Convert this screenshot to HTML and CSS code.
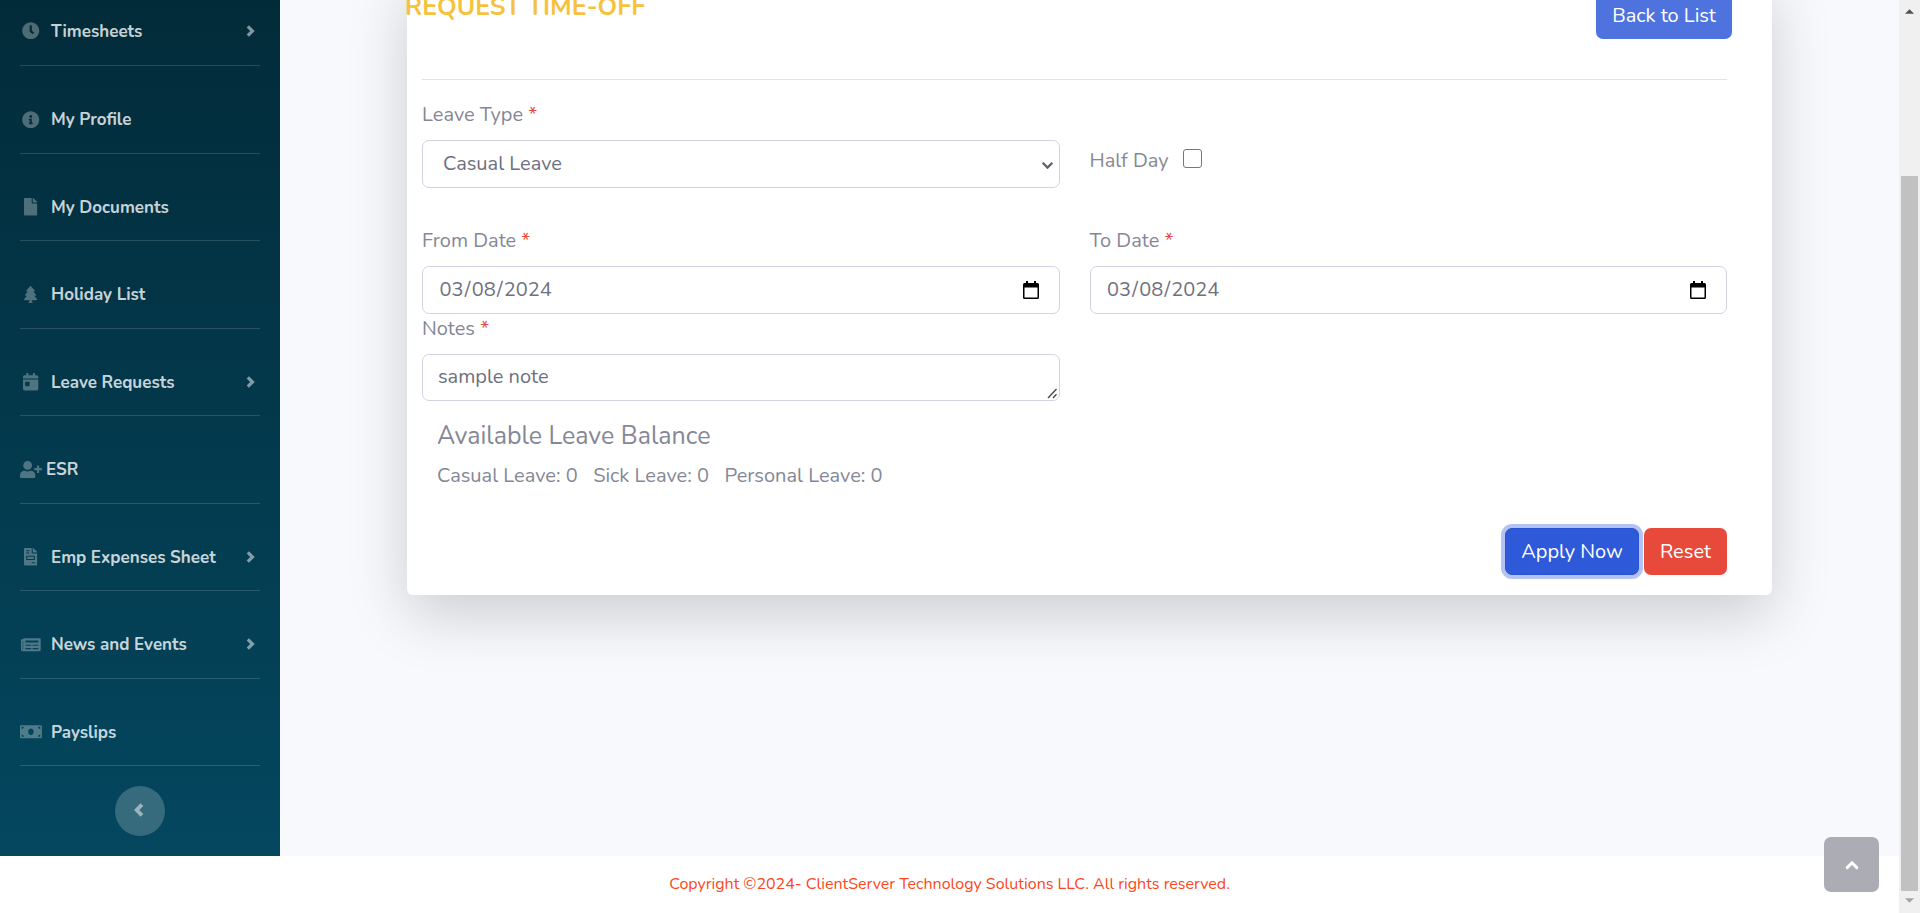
FILE: index.html
```html
<!DOCTYPE html>
<html lang="en">
<head>
<meta charset="utf-8">
<title>Request Time-Off</title>
<link rel="stylesheet" href="styles.css">
</head>
<body>
<div class="window">
  <div class="page">
    <div class="wrapper">
      <nav class="sidebar">
        <a class="item"><span class="ico"><svg viewBox="0 0 512 512"><path d="M256,8C119,8,8,119,8,256S119,504,256,504,504,393,504,256,393,8,256,8Zm92.49,313h0l-20,25a16,16,0,0,1-22.49,2.5h0l-67-49.72a40,40,0,0,1-15-31.23V112a16,16,0,0,1,16-16h32a16,16,0,0,1,16,16V256l58,42.5A16,16,0,0,1,348.49,321Z"/></svg></span><span class="name">Timesheets</span><svg class="angle" viewBox="0 0 9 12"><path d="M1.800 1.300 6.500 6 1.800 10.700"/></svg></a>
        <a class="item"><span class="ico"><svg viewBox="0 0 512 512"><path d="M256 8C119.043 8 8 119.083 8 256c0 136.997 111.043 248 248 248s248-111.003 248-248C504 119.083 392.957 8 256 8zm0 110c23.196 0 42 18.804 42 42s-18.804 42-42 42-42-18.804-42-42 18.804-42 42-42zm56 254c0 6.627-5.373 12-12 12h-88c-6.627 0-12-5.373-12-12v-24c0-6.627 5.373-12 12-12h12v-64h-12c-6.627 0-12-5.373-12-12v-24c0-6.627 5.373-12 12-12h64c6.627 0 12 5.373 12 12v100h12c6.627 0 12 5.373 12 12v24z"/></svg></span><span class="name">My Profile</span></a>
        <a class="item"><span class="ico"><svg viewBox="0 0 384 512"><path d="M224 136V0H24C10.7 0 0 10.7 0 24v464c0 13.3 10.7 24 24 24h336c13.3 0 24-10.7 24-24V160H248c-13.2 0-24-10.8-24-24zm160-14.1v6.1H256V0h6.1c6.4 0 12.5 2.5 17 7l97.9 98c4.5 4.5 7 10.6 7 16.9z"/></svg></span><span class="name">My Documents</span></a>
        <a class="item"><span class="ico"><svg viewBox="0 0 384 512"><path d="M378.31 378.49L298.42 288h30.63c9.01 0 16.98-5 20.78-13.06 3.8-8.04 2.55-17.26-3.28-24.05L268.42 160h28.89c9.1 0 17.3-5.35 20.86-13.61 3.52-8.13 1.86-17.59-4.24-24.08L203.66 4.83c-6.03-6.45-17.28-6.45-23.32 0L70.06 122.31c-6.1 6.49-7.75 15.95-4.24 24.08C69.38 154.65 77.59 160 86.69 160h28.89l-78.14 90.91c-5.81 6.78-7.06 15.99-3.27 24.04C37.97 283 45.93 288 54.95 288h30.63L5.69 378.49c-6 6.79-7.36 16.09-3.56 24.26 3.75 8.05 12 13.25 21.01 13.25H160v24.45l-30.29 48.4c-5.32 10.64 2.42 23.16 14.31 23.16h95.96c11.89 0 19.63-12.52 14.31-23.16L224 440.45V416h136.86c9.01 0 17.26-5.2 21.01-13.25 3.8-8.17 2.44-17.47-3.56-24.26z"/></svg></span><span class="name">Holiday List</span></a>
        <a class="item"><span class="ico"><svg viewBox="0 0 448 512"><path d="M0 464c0 26.5 21.5 48 48 48h352c26.5 0 48-21.5 48-48V192H0v272zm64-192c0-8.8 7.2-16 16-16h96c8.8 0 16 7.2 16 16v96c0 8.8-7.2 16-16 16H80c-8.8 0-16-7.2-16-16v-96zM400 64h-48V16c0-8.8-7.2-16-16-16h-32c-8.8 0-16 7.2-16 16v48H160V16c0-8.8-7.2-16-16-16h-32c-8.8 0-16 7.2-16 16v48H48C21.5 64 0 85.5 0 112v48h448v-48c0-26.5-21.5-48-48-48z"/></svg></span><span class="name">Leave Requests</span><svg class="angle" viewBox="0 0 9 12"><path d="M1.800 1.300 6.500 6 1.800 10.700"/></svg></a>
        <a class="item tight"><span class="ico"><svg viewBox="0 0 640 512"><path d="M624 208h-64v-64c0-8.8-7.2-16-16-16h-32c-8.8 0-16 7.2-16 16v64h-64c-8.8 0-16 7.2-16 16v32c0 8.8 7.2 16 16 16h64v64c0 8.8 7.2 16 16 16h32c8.8 0 16-7.2 16-16v-64h64c8.8 0 16-7.2 16-16v-32c0-8.8-7.2-16-16-16zm-400 48c70.7 0 128-57.3 128-128S294.7 0 224 0 96 57.3 96 128s57.3 128 128 128zm89.6 32h-16.7c-22.2 10.2-46.9 16-72.9 16s-50.6-5.8-72.9-16h-16.7C60.2 288 0 348.2 0 422.4V464c0 26.5 21.5 48 48 48h352c26.5 0 48-21.5 48-48v-41.6c0-74.2-60.2-134.4-134.4-134.4z"/></svg></span><span class="name">ESR</span></a>
        <a class="item"><span class="ico"><svg viewBox="0 0 384 512"><path d="M288 256H96v64h192v-64zm89-151L279.1 7c-4.5-4.5-10.6-7-17-7H256v128h128v-6.1c0-6.3-2.5-12.4-7-16.9zm-153 31V0H24C10.7 0 0 10.7 0 24v464c0 13.3 10.7 24 24 24h336c13.3 0 24-10.7 24-24V160H248c-13.2 0-24-10.8-24-24zM64 72c0-4.42 3.58-8 8-8h80c4.42 0 8 3.58 8 8v16c0 4.42-3.58 8-8 8H72c-4.42 0-8-3.58-8-8V72zm0 64c0-4.42 3.58-8 8-8h80c4.42 0 8 3.58 8 8v16c0 4.42-3.58 8-8 8H72c-4.42 0-8-3.58-8-8v-16zm256 304c0 4.42-3.58 8-8 8h-80c-4.42 0-8-3.58-8-8v-16c0-4.42 3.58-8 8-8h80c4.42 0 8 3.58 8 8v16zm0-200v96c0 8.84-7.16 16-16 16H80c-8.84 0-16-7.16-16-16v-96c0-8.84 7.16-16 16-16h224c8.84 0 16 7.16 16 16z"/></svg></span><span class="name">Emp Expenses Sheet</span><svg class="angle" viewBox="0 0 9 12"><path d="M1.800 1.300 6.500 6 1.800 10.700"/></svg></a>
        <a class="item"><span class="ico"><svg viewBox="0 0 576 512"><path d="M552 64H88c-13.255 0-24 10.745-24 24v8H24c-13.255 0-24 10.745-24 24v272c0 30.928 25.072 56 56 56h472c26.51 0 48-21.49 48-48V88c0-13.255-10.745-24-24-24zM56 400a8 8 0 0 1-8-8V144h16v248a8 8 0 0 1-8 8zm236-16H140c-6.627 0-12-5.373-12-12v-8c0-6.627 5.373-12 12-12h152c6.627 0 12 5.373 12 12v8c0 6.627-5.373 12-12 12zm208 0H348c-6.627 0-12-5.373-12-12v-8c0-6.627 5.373-12 12-12h152c6.627 0 12 5.373 12 12v8c0 6.627-5.373 12-12 12zm-208-96H140c-6.627 0-12-5.373-12-12v-8c0-6.627 5.373-12 12-12h152c6.627 0 12 5.373 12 12v8c0 6.627-5.373 12-12 12zm208 0H348c-6.627 0-12-5.373-12-12v-8c0-6.627 5.373-12 12-12h152c6.627 0 12 5.373 12 12v8c0 6.627-5.373 12-12 12zm0-96H140c-6.627 0-12-5.373-12-12v-40c0-6.627 5.373-12 12-12h360c6.627 0 12 5.373 12 12v40c0 6.627-5.373 12-12 12z"/></svg></span><span class="name">News and Events</span><svg class="angle" viewBox="0 0 9 12"><path d="M1.800 1.300 6.500 6 1.800 10.700"/></svg></a>
        <a class="item"><span class="ico"><svg viewBox="0 0 640 512"><path d="M608 64H32C14.33 64 0 78.33 0 96v320c0 17.67 14.33 32 32 32h576c17.67 0 32-14.33 32-32V96c0-17.67-14.33-32-32-32zM48 400v-64c35.35 0 64 28.65 64 64H48zm0-224v-64h64c0 35.35-28.65 64-64 64zm272 176c-44.19 0-80-42.99-80-96 0-53.02 35.82-96 80-96s80 42.98 80 96c0 53.03-35.83 96-80 96zm272 48h-64c0-35.35 28.65-64 64-64v64zm0-224c-35.35 0-64-28.65-64-64h64v64z"/></svg></span><span class="name">Payslips</span></a>
        <button class="collapse" aria-label="Collapse"><svg viewBox="0 0 10 14"><path d="M7.900 1.700 2.700 7l5.200 5.300"/></svg></button>
      </nav>
      <main class="content">
        <section class="card">
          <header class="card-head">
            <h1>REQUEST TIME-OFF</h1>
            <a class="btn back">Back to List</a>
          </header>
          <div class="form">
            <div class="row first">
              <div class="col">
                <label>Leave Type <b>*</b></label>
                <div class="field select"><span>Casual Leave</span><svg class="caret" viewBox="0 0 13 9"><path d="M1.700 1.700 6.500 6.500l4.800-4.800"/></svg></div>
              </div>
              <div class="col half"><span>Half Day</span><span class="check"></span></div>
            </div>
            <div class="row">
              <div class="col">
                <label>From Date <b>*</b></label>
                <div class="field date"><span>03<i>/</i>08<i>/</i>2024</span><svg class="cal" viewBox="0 0 16 18"><path d="M3 0h2v2h6V0h2v2h1.5Q16 2 16 3.500v13q0 1.500-1.500 1.500h-13Q0 18 0 16.500V3.500Q0 2 1.500 2H3zM1.500 6.500V16.500h13V6.500z"/></svg></div>
              </div>
              <div class="col">
                <label>To Date <b>*</b></label>
                <div class="field date"><span>03<i>/</i>08<i>/</i>2024</span><svg class="cal" viewBox="0 0 16 18"><path d="M3 0h2v2h6V0h2v2h1.5Q16 2 16 3.500v13q0 1.500-1.500 1.500h-13Q0 18 0 16.500V3.500Q0 2 1.500 2H3zM1.500 6.500V16.500h13V6.500z"/></svg></div>
              </div>
            </div>
            <div class="row">
              <div class="col">
                <label>Notes <b>*</b></label>
                <div class="field notes"><span>sample note</span><svg class="grip" viewBox="0 0 10 11"><path d="M1 10 9.500 1M6 10l3.500-3.700"/></svg></div>
              </div>
            </div>
            <div class="balance">
              <h2>Available Leave Balance</h2>
              <p><span>Casual Leave: 0</span><span>Sick Leave: 0</span><span>Personal Leave: 0</span></p>
            </div>
            <div class="actions">
              <button class="btn apply">Apply Now</button>
              <button class="btn reset">Reset</button>
            </div>
          </div>
        </section>
      </main>
    </div>
    <footer class="footer"><span>Copyright ©2024- ClientServer Technology Solutions LLC. All rights reserved.</span></footer>
  </div>
  <div class="scrollbar">
    <svg viewBox="0 0 10 5"><path d="M0 5 5 0l5 5z" fill="#505050"/></svg>
    <div class="thumb"></div>
    <svg viewBox="0 0 10 5"><path d="M0 0l5 5 5-5z" fill="#a3a3a3"/></svg>
  </div>
  <a class="to-top" aria-label="Back to top"><svg viewBox="0 0 14 10"><path d="M2.200 7.600 7 2.800l4.800 4.800"/></svg></a>
</div>
</body>
</html>
```
FILE: styles.css
```css
* { box-sizing: border-box; }
body { margin: 0; overflow: hidden; font-family: Nunito, Lato, sans-serif; font-size: 20px; line-height: 30px; color: #858796; }
svg { display: block; }
span { white-space: nowrap; }
.window { position: relative; display: flex; width: 1920px; height: 913px; overflow: hidden; background: #fff; }
.page { width: 1899px; height: 913px; display: flex; flex-direction: column; }
.wrapper { display: flex; height: 856px; overflow: hidden; background: #f8f9fc; }

.sidebar { width: 280px; padding: 0 20px; display: flex; flex-direction: column; align-items: center; background: linear-gradient(180deg, #022b39 0%, #04475f 100%); }
.item { width: 240px; height: 87.5px; flex: none; display: flex; align-items: center; padding: 38px 0 18px; border-bottom: 1px solid rgba(255,255,255,.15); color: rgba(255,255,255,.8); font-size: 17px; font-weight: 700; }
.item:first-child { height: 66px; padding: 0 0 4px; }
.name { margin-top: 2px; }
.item .ico { width: 22px; display: flex; justify-content: center; margin-right: 9px; }
.item.tight .ico { margin-right: 4px; }
.ico svg { height: 17.5px; fill: rgba(255,255,255,.3); }
.angle { width: 9px; height: 12px; margin-left: auto; margin-right: 5px; fill: none; stroke: rgba(255,255,255,.5); stroke-width: 3.2; }
.collapse { width: 50px; height: 50px; margin-top: 20px; padding: 0; border: 0; border-radius: 50%; background: rgba(255,255,255,.2); display: flex; align-items: center; justify-content: center; }
.collapse svg { width: 10px; height: 14px; margin: 0 2px 3px 0; fill: none; stroke: rgba(255,255,255,.5); stroke-width: 3.8; }

.content { flex: 1; padding-left: 127px; }
.card { width: 1365px; height: 620px; margin-top: -25px; background: #fff; border-radius: 6px; box-shadow: 0 20px 60px rgba(0,0,0,.175); }
.card-head { height: 64px; padding-right: 40px; display: flex; align-items: flex-end; justify-content: space-between; }
h1 { margin: 0 0 14px -2px; font-size: 25px; line-height: 36px; font-weight: 700; color: #f6c23e; white-space: nowrap; }
.btn { height: 47px; border: 0; border-radius: 7px; padding: 0; display: flex; align-items: center; justify-content: center; color: #fff; font: inherit; }
.back { width: 136px; background: #4e73df; }
.form { margin: 40px 45px 0 15px; border-top: 1px solid #e3e3e4; }
.row { display: grid; grid-template-columns: 638px 637.5px; column-gap: 29.5px; }
.row.first { padding-top: 20px; height: 146px; }
label { display: block; height: 40px; line-height: 30px; }
label b { color: #e74a3b; font-weight: 400; }
.field { height: 48px; border: 1px solid #d1d3e2; border-radius: 7px; display: flex; align-items: center; justify-content: space-between; color: #6e707e; }
.select { padding: 0 5px 0 20px; }
.caret { width: 13px; height: 9px; margin-top: 2px; fill: none; stroke: #5f6170; stroke-width: 2.3; }
.half { display: flex; height: 30px; margin-top: 46px; align-items: center; }
.check { width: 19px; height: 19px; border: 1.5px solid #767676; border-radius: 3px; margin: 0 0 5px 14.5px; }
.date { padding: 0 20px 1px 16.5px; }
.date i { font-style: normal; margin: 0 1.25px; }
.cal { width: 16px; height: 18px; fill: #000; }
.notes { height: 47px; padding: 0 2px 1px 15px; }
.grip { width: 10px; height: 11px; align-self: flex-end; fill: none; stroke: #444; stroke-width: 1.3; }
.balance { padding: 17px 0 0 15px; }
h2 { margin: 0; font-size: 25px; line-height: 36px; font-weight: 400; }
.balance p { margin: 7px 0 0; display: flex; gap: 15.5px; }
.actions { display: flex; justify-content: flex-end; gap: 5px; margin-top: 37px; }
.apply { width: 134px; background: #2e59d9; border: 1px solid #2653d4; box-shadow: 0 0 0 4px #b4c3f3; }
.reset { width: 83px; background: #e74a3b; }
.footer { height: 57px; background: #fff; color: #fd4720; font-size: 16px; display: flex; align-items: center; justify-content: center; padding-bottom: 1px; }

.scrollbar { width: 21px; height: 913px; background: #f0f0f0; display: flex; flex-direction: column; align-items: center; padding: 9px 0 10px; }
.scrollbar svg { width: 9px; height: 5px; flex: none; }
.thumb { width: 17px; height: 715px; margin: 162px 0 7px; background: #c1c1c1; flex: none; }
.to-top { position: absolute; left: 1824px; top: 837px; width: 55px; height: 55px; border-radius: 7px; background: #acacb5; display: flex; align-items: center; justify-content: center; }
.to-top svg { width: 14px; height: 10px; fill: none; stroke: #fff; stroke-width: 3; stroke-linecap: round; }
```
